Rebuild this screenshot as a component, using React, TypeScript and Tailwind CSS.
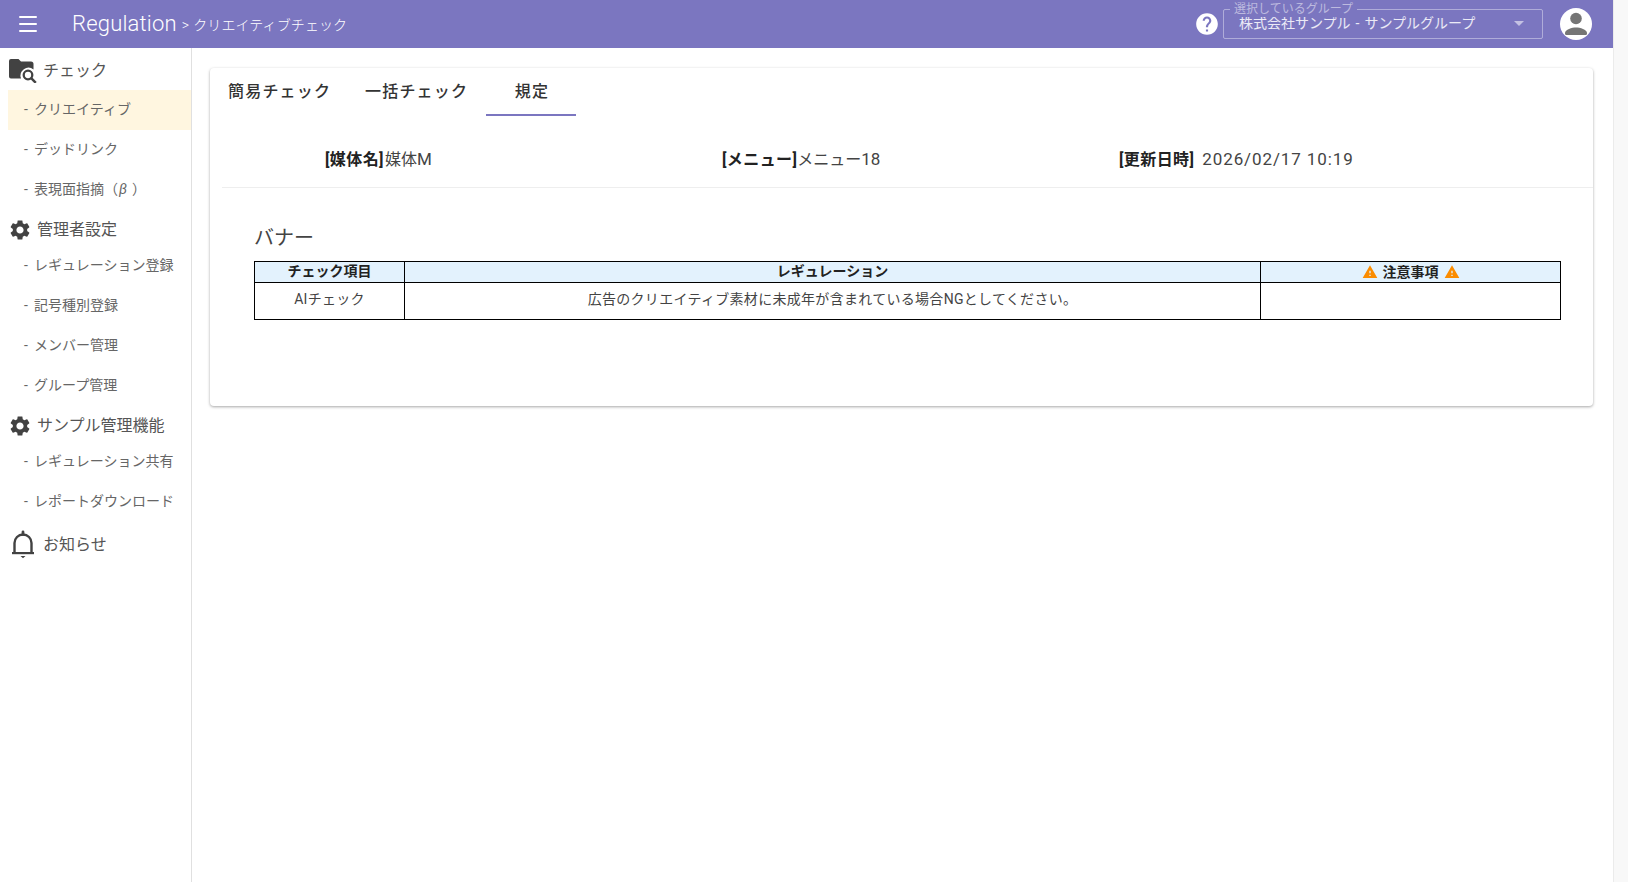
import { Menu } from "lucide-react";

const FONT = "font-['Roboto','Noto_Sans_CJK_JP',sans-serif]";

function Gear() {
  return (
    <svg viewBox="0 0 24 24" className="w-6 h-6 fill-[#424242] shrink-0">
      <path d="M19.14 12.94c.04-.3.06-.61.06-.94 0-.32-.02-.64-.07-.94l2.03-1.58c.18-.14.23-.41.12-.61l-1.92-3.32c-.12-.22-.37-.29-.59-.22l-2.39.96c-.5-.38-1.03-.7-1.62-.94l-.36-2.54c-.04-.24-.24-.41-.48-.41h-3.84c-.24 0-.43.17-.47.41l-.36 2.54c-.59.24-1.13.57-1.62.94l-2.39-.96c-.22-.08-.47 0-.59.22L2.74 8.87c-.12.21-.08.47.12.61l2.03 1.58c-.05.3-.09.63-.09.94s.02.64.07.94l-2.03 1.58c-.18.14-.23.41-.12.61l1.92 3.32c.12.22.37.29.59.22l2.39-.96c.5.38 1.03.7 1.62.94l.36 2.54c.05.24.24.41.48.41h3.84c.24 0 .44-.17.47-.41l.36-2.54c.59-.24 1.13-.56 1.62-.94l2.39.96c.22.08.47 0 .59-.22l1.92-3.32c.12-.22.07-.47-.12-.61l-2.01-1.58zM12 15.6c-1.98 0-3.6-1.62-3.6-3.6s1.62-3.6 3.6-3.6 3.6 1.62 3.6 3.6-1.62 3.6-3.6 3.6z" />
    </svg>
  );
}

function FolderSearch() {
  return (
    <svg viewBox="0 0 28 24" className="w-[28px] h-[24px] shrink-0">
      <path
        fill="#424242"
        d="M2 0h7.500l2.500 2.500h10A2.500 2.500 0 0 1 24.500 5v5.500a8 8 0 0 0-12.500 9H2a2 2 0 0 1-2-2V2a2 2 0 0 1 2-2z"
      />
      <circle cx="19" cy="16" r="4.300" fill="none" stroke="#424242" strokeWidth="2.300" />
      <path d="M22.200 19.200l4.600 4.600" stroke="#424242" strokeWidth="2.500" />
    </svg>
  );
}

function Bell() {
  return (
    <svg viewBox="0 0 24 30" className="w-6 h-[30px] shrink-0">
      <path
        fill="none"
        stroke="#424242"
        strokeWidth="2.400"
        d="M3.500 23V13a8.500 8.500 0 0 1 17 0v10"
      />
      <path d="M12 2v2.500" stroke="#424242" strokeWidth="2.800" strokeLinecap="round" />
      <path d="M1 22h22v2.200H1z" fill="#424242" />
      <path d="M9.500 26h5l-2.500 2.200z" fill="#424242" />
    </svg>
  );
}

function Warning() {
  return (
    <svg viewBox="0 0 24 24" className="w-4 h-4 fill-[#fb8c00] shrink-0">
      <path d="M1 21h22L12 2 1 21zm12-3h-2v-2h2v2zm0-4h-2v-4h2v4z" />
    </svg>
  );
}

function Group({ icon, label, className }: { icon: React.ReactNode; label: string; className: string }) {
  return (
    <div className={`flex items-center text-base text-[#555] ${className}`}>
      {icon}
      <span>{label}</span>
    </div>
  );
}

function Item({ label, active }: { label: React.ReactNode; active?: boolean }) {
  return (
    <div
      className={`ml-2 h-10 pl-4 pb-[2px] flex items-center text-sm text-[#666] ${
        active ? "bg-[#fff6e0]" : ""
      }`}
    >
      <span className="w-[10px]">-</span>
      <span>{label}</span>
    </div>
  );
}

export default function App() {
  return (
    <div className={`${FONT} flex h-screen overflow-hidden bg-white`}>
      <div className="w-[1613px] flex flex-col">
        <header className="h-12 shrink-0 bg-[#7b76c0] flex items-center text-white pl-[16px] pr-[21px]">
          <Menu className="w-6 h-6" strokeWidth={2} />
          <div className="ml-[32px] mt-[-2px] flex items-baseline">
            <span className="text-[22px] font-light tracking-[0.2px]">Regulation</span>
            <span className="ml-[5px] text-sm tracking-[0.1px] font-light -translate-y-px">
              &gt;<span className="ml-[4px]">クリエイティブチェック</span>
            </span>
          </div>
          <svg viewBox="0 0 24 24" className="ml-auto w-[26px] h-[26px] fill-white shrink-0">
            <path d="M12 2C6.48 2 2 6.48 2 12s4.48 10 10 10 10-4.48 10-10S17.52 2 12 2zm1 17h-2v-2h2v2zm2.070-7.750l-.9.920C13.450 12.900 13 13.500 13 15h-2v-.5c0-1.100.45-2.100 1.170-2.830l1.240-1.260c.37-.36.59-.86.59-1.410 0-1.100-.9-2-2-2s-2 .9-2 2H8c0-2.210 1.790-4 4-4s4 1.790 4 4c0 .88-.36 1.680-.93 2.250z" />
          </svg>
          <div className="relative ml-[3px] w-[320px] h-[30px] mt-[-1px] border border-white/40 rounded-[2px] flex items-center pl-[15px] pr-[18px]">
            <span className="absolute left-[6px] top-[-8px] px-[4px] bg-[#7b76c0] text-xs leading-[15px] text-white/50">
              選択しているグループ
            </span>
            <span className="text-sm text-white/85 mt-[-2px] whitespace-pre [word-spacing:1.5px]">株式会社サンプル - サンプルグループ</span>
            <span className="ml-auto w-0 h-0 border-x-[5px] border-x-transparent border-t-[5px] border-t-white/55" />
          </div>
          <div className="ml-[17px] w-8 h-8 rounded-full bg-white flex items-center justify-center shrink-0">
            <svg viewBox="0 0 32 32" className="w-8 h-8 fill-[#757575]">
              <circle cx="16" cy="10.500" r="5.800" />
              <path d="M5 25c0-3.500 7-5.500 11-5.500s11 2 11 5.500v.5c0 1-.8 1.500-1.500 1.500h-19c-.7 0-1.500-.5-1.500-1.500z" />
            </svg>
          </div>
        </header>

        <div className="flex-1 flex min-h-0">
          <aside className="w-[192px] shrink-0 border-r border-[#e0e0e0]">
            <Group
              icon={<FolderSearch />}
              label="チェック"
              className="h-[42px] pl-[9px] gap-[6px] pt-[4px]"
            />
            <Item label="クリエイティブ" active />
            <Item label="デッドリンク" />
            <Item
              label={
                <>
                  表現面指摘（<i className="italic ml-[1px] mr-[5px]">β</i>）
                </>
              }
            />
            <Group icon={<Gear />} label="管理者設定" className="h-[36px] pl-2 gap-[5px] pt-[4px]" />
            <Item label="レギュレーション登録" />
            <Item label="記号種別登録" />
            <Item label="メンバー管理" />
            <Item label="グループ管理" />
            <Group icon={<Gear />} label="サンプル管理機能" className="h-[36px] pl-2 gap-[5px] pt-[3px]" />
            <Item label="レギュレーション共有" />
            <Item label="レポートダウンロード" />
            <Group icon={<Bell />} label="お知らせ" className="h-[48px] pl-[11px] gap-[8px] pb-[3px]" />
          </aside>

          <main className="flex-1 pl-[18px] pr-5 pt-5">
            <section className="h-[338px] bg-white rounded-[4px] shadow-[0_1px_3px_rgba(0,0,0,0.35)] pl-3">
              <div className="flex h-[48px] text-[#333] font-medium text-base tracking-[1.2px]">
                <div className="pl-[6px] pt-[12px] w-[127px]">簡易チェック</div>
                <div className="pl-[16px] pt-[12px] w-[137px]">一括チェック</div>
                <div className="w-[90px] pt-[12px] pl-[2px] text-center border-b-2 border-[#7b76c0]">規定</div>
              </div>

              <div className="h-[72px] grid grid-cols-[397px_397px_1fr] items-center pl-[103px] pt-[17px] border-b border-[#eeeeee] text-base text-[#444]">
                <div>
                  <b className="font-bold text-[#222] tracking-[0.4px]">[媒体名]</b>
                  <span className="ml-[1px]">媒体<span className="text-[17px]">M</span></span>
                </div>
                <div>
                  <b className="font-bold text-[#222] tracking-[0.4px]">[メニュー]</b>メニュー
                  <span className="text-[17px]">18</span>
                </div>
                <div>
                  <b className="font-bold text-[#222] tracking-[0.4px]">[更新日時]</b>
                  <span className="ml-2 text-[17px] tracking-[0.9px]">2026/02/17 10:19</span>
                </div>
              </div>

              <div className="pl-[32px] pr-[32px]">
                <h2 className="mt-[36px] h-[37px] text-[20px] leading-[28px] font-normal text-[#444]">バナー</h2>
                <table className="w-full table-fixed border-collapse border border-black text-sm">
                  <colgroup>
                    <col className="w-[150px]" />
                    <col className="w-[856px]" />
                    <col />
                  </colgroup>
                  <thead>
                    <tr className="bg-[#e3f2fd] h-[21px] text-sm leading-[17px] text-[#222] font-bold">
                      <th className="border border-black p-0 pb-[1px] font-bold">チェック項目</th>
                      <th className="border border-black p-0 pb-[1px] font-bold">レギュレーション</th>
                      <th className="border border-black p-0 font-bold">
                        <div className="flex items-center justify-center gap-[5px]">
                          <Warning />
                          注意事項
                          <Warning />
                        </div>
                      </th>
                    </tr>
                  </thead>
                  <tbody>
                    <tr className="h-[37px] text-[#444] text-center align-top">
                      <td className="border border-black pt-[7px] leading-[18px] tracking-[0.3px]">AIチェック</td>
                      <td className="border border-black pt-[7px] leading-[18px] tracking-[0.3px]">
                        広告のクリエイティブ素材に未成年が含まれている場合NGとしてください。
                      </td>
                      <td className="border border-black" />
                    </tr>
                  </tbody>
                </table>
              </div>
            </section>
          </main>
        </div>
      </div>
      <div className="w-[15px] shrink-0 bg-[#f8f8f8] border-l border-[#ebebeb]" />
    </div>
  );
}
